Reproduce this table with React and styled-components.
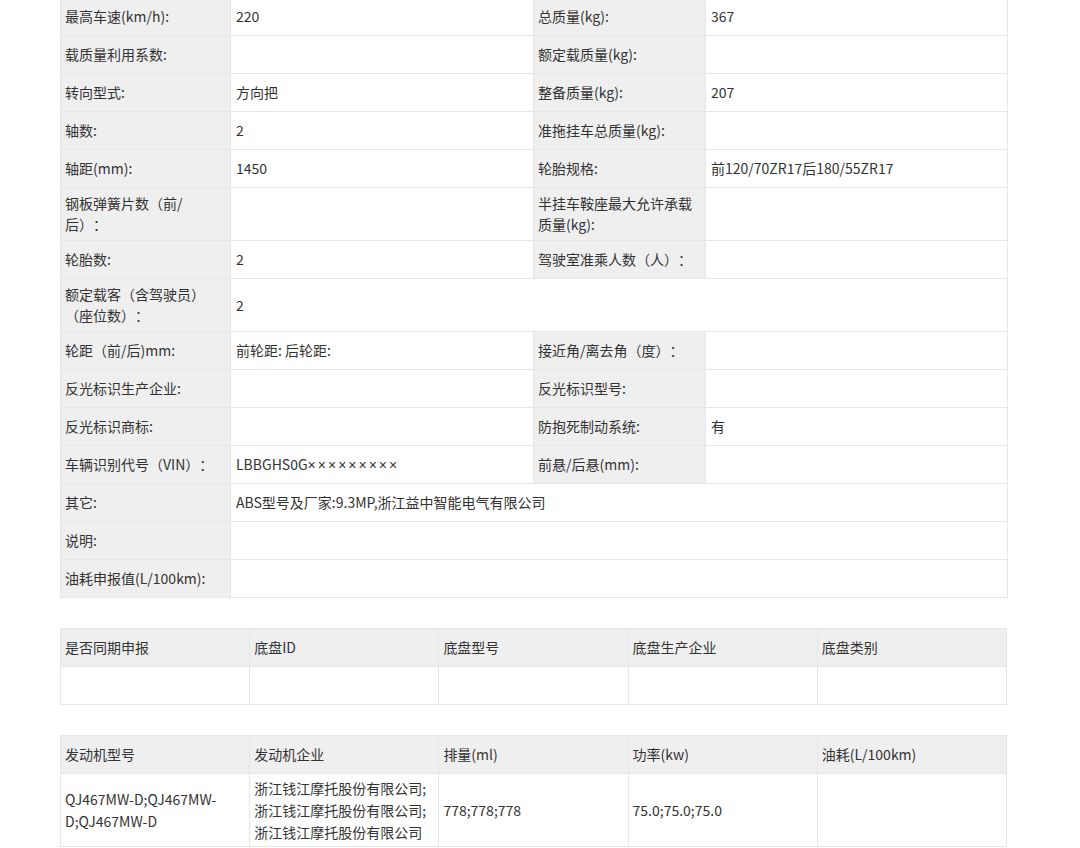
import React from "react";
import styled, { createGlobalStyle } from "styled-components";

const GlobalStyle = createGlobalStyle`
  html, body {
    margin: 0;
    padding: 0;
    background: #ffffff;
  }
  body {
    font-family: "Noto Sans CJK SC", "Noto Sans", sans-serif;
    font-size: 14px;
    color: #333333;
    text-spacing-trim: space-all;
  }
`;

const Page = styled.div`
  display: flex;
  flex-direction: column;
  gap: 30px;
  width: 947px;
  margin: -3px 0 0 60px;
`;

const Table = styled.table`
  width: 947px;
  border-collapse: collapse;
  table-layout: fixed;
`;

const Cell = styled.td`
  border: 1px solid #e6e6e6;
  height: 27px;
  padding: ${(p) => (p.$label ? "5px 10px 5px 4px" : "5px 6px 5px 5px")};
  line-height: 21px;
  background: ${(p) => (p.$label ? "#efefef" : "#ffffff")};
  vertical-align: middle;
  text-align: left;
`;

const HeadCell = styled.th`
  border: 1px solid #e6e6e6;
  height: 27px;
  padding: 5px 6px 5px 4px;
  line-height: 21px;
  background: #efefef;
  font-weight: normal;
  text-align: left;
  vertical-align: middle;
`;

const BodyCell = styled.td`
  border: 1px solid #e6e6e6;
  height: 31px;
  padding: 3px 6px 3px 4px;
  line-height: 22px;
  background: #ffffff;
  vertical-align: middle;
  text-align: left;
`;

const Mask = styled.span`
  font-family: "Liberation Sans", sans-serif;
  font-size: 14px;
  letter-spacing: 2px;
`;

const specs = [
  ["最高车速(km/h):", "220", "总质量(kg):", "367"],
  ["载质量利用系数:", "", "额定载质量(kg):", ""],
  ["转向型式:", "方向把", "整备质量(kg):", "207"],
  ["轴数:", "2", "准拖挂车总质量(kg):", ""],
  ["轴距(mm):", "1450", "轮胎规格:", "前120/70ZR17后180/55ZR17"],
  ["钢板弹簧片数（前/后）：", "", "半挂车鞍座最大允许承载质量(kg):", ""],
  ["轮胎数:", "2", "驾驶室准乘人数（人）：", ""],
  ["额定载客（含驾驶员）（座位数）：", "2"],
  ["轮距（前/后)mm:", "前轮距: 后轮距:", "接近角/离去角（度）：", ""],
  ["反光标识生产企业:", "", "反光标识型号:", ""],
  ["反光标识商标:", "", "防抱死制动系统:", "有"],
  [
    "车辆识别代号（VIN）：",
    <>
      LBBGHS0G<Mask>×××××××××</Mask>
    </>,
    "前悬/后悬(mm):",
    "",
  ],
  ["其它:", "ABS型号及厂家:9.3MP,浙江益中智能电气有限公司"],
  ["说明:", ""],
  ["油耗申报值(L/100km):", ""],
];

const chassisHead = ["是否同期申报", "底盘ID", "底盘型号", "底盘生产企业", "底盘类别"];
const engineHead = ["发动机型号", "发动机企业", "排量(ml)", "功率(kw)", "油耗(L/100km)"];
const engineRow = [
  "QJ467MW-D;QJ467MW-D;QJ467MW-D",
  "浙江钱江摩托股份有限公司;浙江钱江摩托股份有限公司;浙江钱江摩托股份有限公司",
  "778;778;778",
  "75.0;75.0;75.0",
  "",
];

function SpecTable() {
  return (
    <Table>
      <colgroup>
        <col style={{ width: 170 }} />
        <col style={{ width: 303 }} />
        <col style={{ width: 172 }} />
        <col style={{ width: 302 }} />
      </colgroup>
      <tbody>
        {specs.map((r, i) => (
          <tr key={i}>
            <Cell $label>{r[0]}</Cell>
            {r.length === 2 ? (
              <Cell colSpan={3}>{r[1]}</Cell>
            ) : (
              <>
                <Cell>{r[1]}</Cell>
                <Cell $label>{r[2]}</Cell>
                <Cell>{r[3]}</Cell>
              </>
            )}
          </tr>
        ))}
      </tbody>
    </Table>
  );
}

function GridTable({ head, row }) {
  return (
    <Table>
      <thead>
        <tr>
          {head.map((h) => (
            <HeadCell key={h}>{h}</HeadCell>
          ))}
        </tr>
      </thead>
      <tbody>
        <tr>
          {row.map((c, i) => (
            <BodyCell key={i}>{c}</BodyCell>
          ))}
        </tr>
      </tbody>
    </Table>
  );
}

export default function App() {
  return (
    <>
      <GlobalStyle />
      <Page>
        <SpecTable />
        <GridTable head={chassisHead} row={["", "", "", "", ""]} />
        <GridTable head={engineHead} row={engineRow} />
      </Page>
    </>
  );
}
